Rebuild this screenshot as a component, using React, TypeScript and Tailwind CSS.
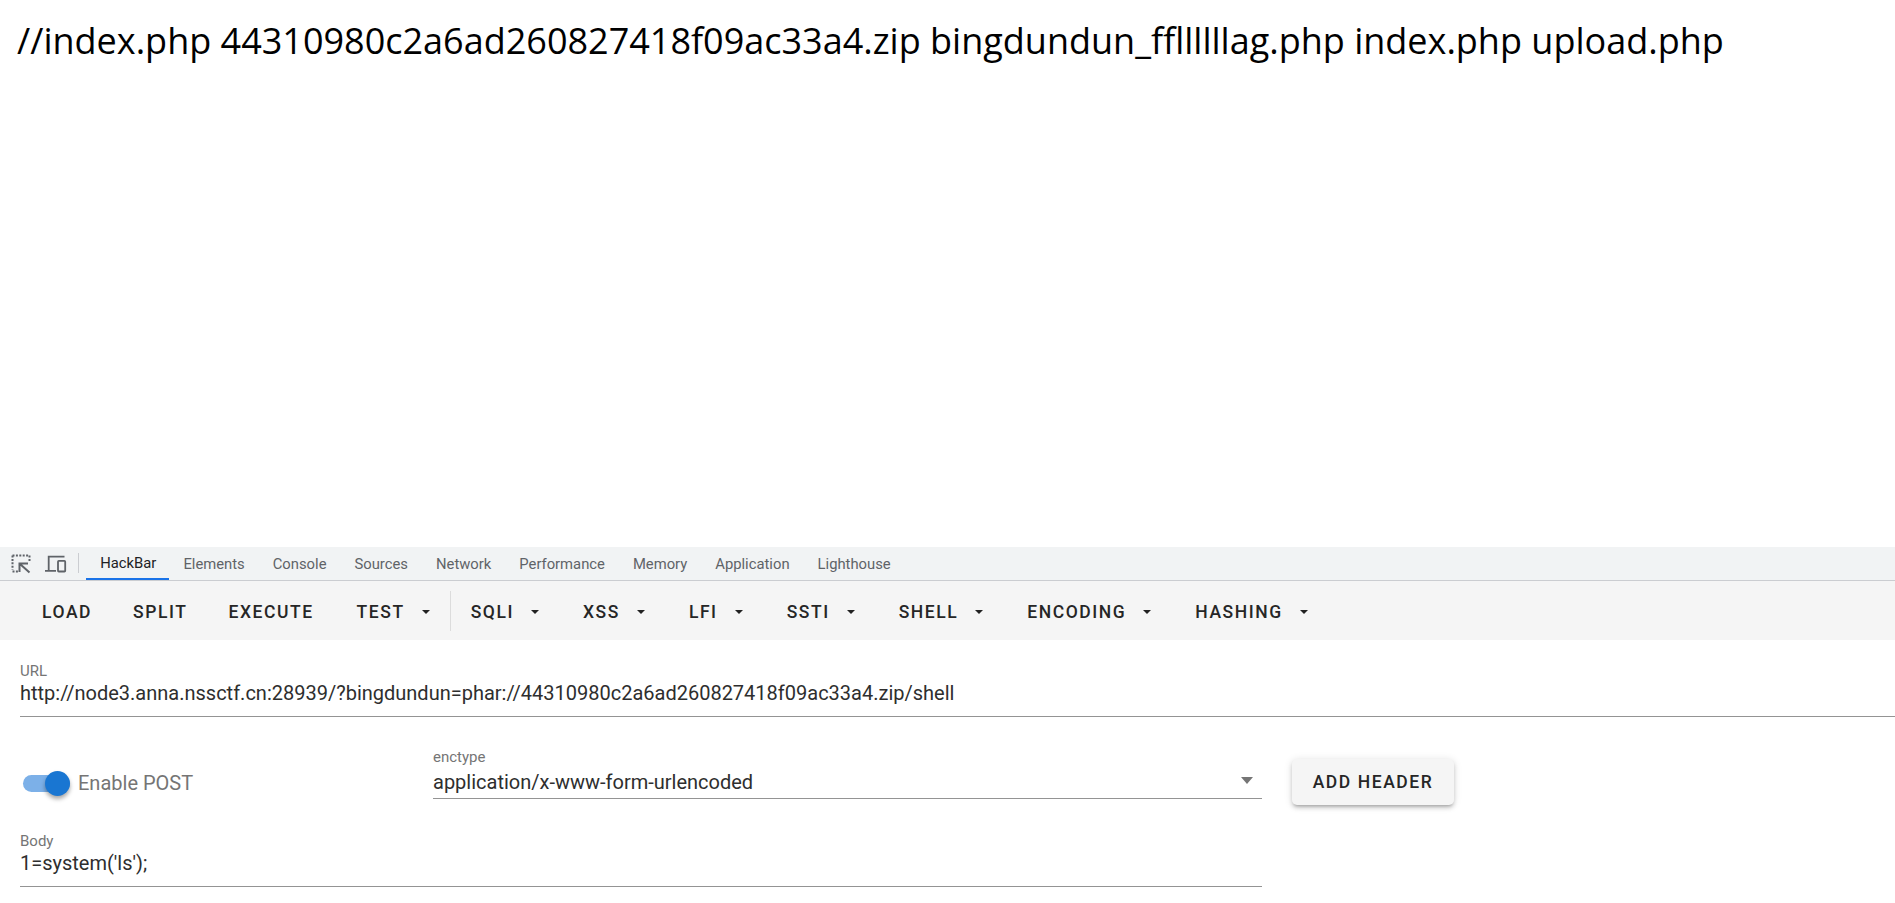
const mainTabs = ["HackBar", "Elements", "Console", "Sources", "Network", "Performance", "Memory", "Application", "Lighthouse"];

const Caret = () => (
  <span className="ml-[17px] h-0 w-0 border-x-[4px] border-t-[4px] border-x-transparent border-t-[#222222]" />
);

const ToolButton = ({ label, menu, padRight = "pr-[22px]" }: { label: string; menu?: boolean; padRight?: string }) => (
  <button className={`mr-[2px] flex h-[45px] items-center pl-5 text-[17.5px] font-medium tracking-[1.56px] text-[#262626] ${padRight}`}>
    {label}
    {menu && <Caret />}
  </button>
);

const Field = ({ label, value, className, valueClass = "", children }: { label: string; value: string; className: string; valueClass?: string; children?: React.ReactNode }) => (
  <div className={`border-b border-[#949494] ${className}`}>
    <div className="text-[15px] leading-5 text-[#757575]">{label}</div>
    <div className={`flex h-6 items-center justify-between text-[20px] leading-6 text-[#2e2e2e] ${valueClass}`}>
      <span>{value}</span>
      {children}
    </div>
  </div>
);

export default function App() {
  return (
    <div className="flex h-[903px] flex-col overflow-hidden bg-white font-['Roboto',sans-serif]">
      {/* page output */}
      <div className="h-[547px] shrink-0 px-[17px] pt-[16px] font-['Open_Sans',sans-serif] text-[36px] leading-[50px] text-black">
        //index.php 44310980c2a6ad260827418f09ac33a4.zip bingdundun_ffllllllag.php index.php upload.php
      </div>

      {/* devtools tab strip */}
      <div className="flex h-[34px] shrink-0 items-stretch border-b border-[#cbcdd1] bg-[#f1f3f4] pl-[10px]">
        <svg viewBox="0 0 22 20" className="mt-[7px] h-[20px] w-[22px] text-[#5f6368]" fill="none" stroke="currentColor">
          <path d="M2.5 1.5h17M19.5 1.5v6M2.5 1.5v14M2.5 17.5h6" strokeWidth="2" strokeDasharray="2 1.4" />
          <path d="M9.5 9.5h8.5M9.5 8.5v9.5M10 10l9.5 8.5" strokeWidth="2" />
        </svg>
        <svg viewBox="0 0 24 20" className="ml-[12px] mt-[7px] h-[20px] w-[24px] text-[#5f6368]" fill="none" stroke="currentColor" strokeWidth="1.8">
          <path d="M20.5 2.7H4.7v14M1 16.8h11" />
          <rect x="14" y="6.9" width="7.2" height="10.6" rx="0.8" />
        </svg>
        <div className="ml-[10px] mt-[6px] h-[20px] w-px bg-[#cbcdd1]" />
        <div className="ml-[7px] flex">
          {mainTabs.map((tab, i) => (
            <div key={tab} className={`flex items-center pt-[2px] text-[14.8px] ${i === 0 ? "border-b-2 border-[#1a73e8] pl-[14.25px] pr-[13px] text-[#202124]" : "px-[14px] text-[#5f6368]"}`}>
              {tab}
            </div>
          ))}
        </div>
      </div>

      {/* hackbar toolbar */}
      <div className="flex h-[59px] shrink-0 items-center bg-[#f5f5f5] pl-[22px] pt-[3px]">
        <ToolButton label="LOAD" padRight="pr-[19px]" />
        <ToolButton label="SPLIT" padRight="pr-[19px]" />
        <ToolButton label="EXECUTE" padRight="pr-[21px]" />
        <ToolButton label="TEST" menu padRight="pr-[18px]" />
        <div className="mt-[-3px] h-[40px] w-px bg-[#dcdcdc]" />
        <ToolButton label="SQLI" menu />
        <ToolButton label="XSS" menu />
        <ToolButton label="LFI" menu />
        <ToolButton label="SSTI" menu />
        <ToolButton label="SHELL" menu />
        <ToolButton label="ENCODING" menu />
        <ToolButton label="HASHING" menu />
      </div>

      {/* form */}
      <div className="pl-5 pt-[21px]">
        <Field label="URL" value="http://node3.anna.nssctf.cn:28939/?bingdundun=phar://44310980c2a6ad260827418f09ac33a4.zip/shell" className="h-[56px]" />

        <div className="mt-[30px] flex items-start pl-[3px]">
          <div className="mt-[21px] flex w-[410px] items-center">
            <div className="relative h-[17px] w-[47px] rounded-full bg-[#7cb0e8]">
              <div className="absolute right-0 top-[-4px] h-[25px] w-[25px] rounded-full bg-[#1976d2] shadow-[0_3px_4px_rgba(0,0,0,0.35)]" />
            </div>
            <span className="ml-[8px] text-[20px] text-[#757575]">Enable POST</span>
          </div>
          <Field label="enctype" value="application/x-www-form-urlencoded" className="h-[52px] w-[829px]" valueClass="mt-[3px]">
            <span className="mr-[9px] mt-[-4px] h-0 w-0 border-x-[6.5px] border-t-[7px] border-x-transparent border-t-[#757575]" />
          </Field>
          <button className="ml-[30px] mt-[12px] h-[46px] w-[162px] rounded-[5px] bg-[#f5f5f5] pt-px text-[17.5px] font-medium tracking-[1.56px] text-[#262626] shadow-[0_3px_3px_-2px_rgba(0,0,0,0.2),0_3px_4px_0_rgba(0,0,0,0.14),0_1px_8px_0_rgba(0,0,0,0.12)]">
            ADD HEADER
          </button>
        </div>

        <Field label="Body" value="1=system('ls');" className="mt-[26px] h-[56px] w-[1242px]" />
      </div>
    </div>
  );
}
